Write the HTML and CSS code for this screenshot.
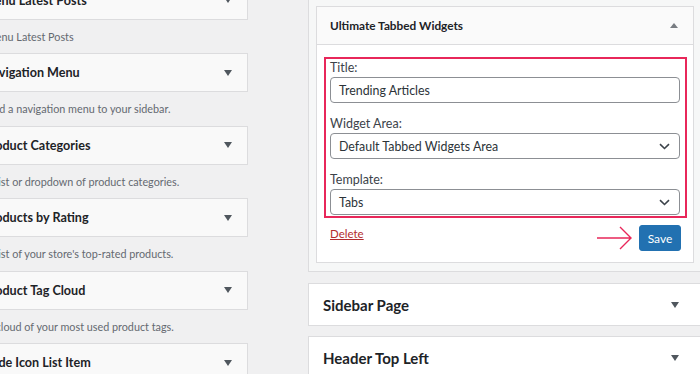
FILE: index.html
```html
<!DOCTYPE html>
<html lang="en">
<head>
    <meta charset="UTF-8">
    <meta name="viewport" content="width=device-width, initial-scale=1.0">
    <title>Widgets</title>
    <link rel="stylesheet" href="styles.css">
</head>
<body>
<main class="screen">
    <section class="available">
        <div class="w_card"><span class="w_title">Menu Latest Posts</span><i class="tri"></i></div>
        <div class="w_desc">Menu Latest Posts</div>
        <div class="w_card"><span class="w_title">Navigation Menu</span><i class="tri"></i></div>
        <div class="w_desc">Add a navigation menu to your sidebar.</div>
        <div class="w_card"><span class="w_title">Product Categories</span><i class="tri"></i></div>
        <div class="w_desc">A list or dropdown of product categories.</div>
        <div class="w_card"><span class="w_title">Products by Rating</span><i class="tri"></i></div>
        <div class="w_desc">A list of your store's top-rated products.</div>
        <div class="w_card"><span class="w_title">Product Tag Cloud</span><i class="tri"></i></div>
        <div class="w_desc">A cloud of your most used product tags.</div>
        <div class="w_card"><span class="w_title">Code Icon List Item</span><i class="tri"></i></div>
    </section>

    <section class="sidebars">
        <div class="holder">
            <div class="widget">
                <div class="widget_top">
                    <span class="widget_name">Ultimate Tabbed Widgets</span>
                    <i class="tri up"></i>
                </div>
                <div class="widget_body">
                    <div class="marked">
                        <div class="field">
                            <label class="lbl">Title:</label>
                            <div class="ctrl">Trending Articles</div>
                        </div>
                        <div class="field">
                            <label class="lbl">Widget Area:</label>
                            <div class="ctrl">Default Tabbed Widgets Area
                                <svg class="chev" width="11" height="7" viewBox="0 0 11 7"><path d="M1 1.2 L5.5 5.5 L10 1.2" fill="none" stroke="#3c434a" stroke-width="1.6"/></svg>
                            </div>
                        </div>
                        <div class="field last">
                            <label class="lbl">Template:</label>
                            <div class="ctrl">Tabs
                                <svg class="chev" width="11" height="7" viewBox="0 0 11 7"><path d="M1 1.2 L5.5 5.5 L10 1.2" fill="none" stroke="#3c434a" stroke-width="1.6"/></svg>
                            </div>
                        </div>
                    </div>
                    <div class="actions">
                        <a class="del" href="#">Delete</a>
                        <svg class="pointer" width="36" height="24" viewBox="0 0 36 24"><path d="M0 12 H34 M23 1 L34 12 L23 23" fill="none" stroke="#e8275a" stroke-width="1.4"/></svg>
                        <button class="but_save" type="button">Save</button>
                    </div>
                </div>
            </div>
        </div>
        <div class="sb_card"><span class="sb_title">Sidebar Page</span><i class="tri"></i></div>
        <div class="sb_card"><span class="sb_title">Header Top Left</span><i class="tri"></i></div>
    </section>
</main>
</body>
</html>
```

FILE: styles.css
```css
*{
    box-sizing: border-box;
    font-family: Lato, "Open Sans", Arial, sans-serif;
}
body{
    margin: 0;
    background-color: #f0f0f1;
    color: #1d2327;
    overflow: hidden;
    height: 374px;
}
.screen{
    display: flex;
    align-items: flex-start;
}
.available{
    margin-left: -30px;
    margin-top: -19.5px;
    width: 278px;
    flex-shrink: 0;
}
.w_card{
    height: 39px;
    background-color: #f9f9f9;
    border: 1px solid #dcdcde;
    display: flex;
    align-items: center;
    justify-content: space-between;
    padding: 0 14px 0 12px;
}
.w_title{
    font-size: 12.6px;
    font-weight: 700;
}
.w_desc{
    height: 33.5px;
    padding: 8px 16px 0;
    font-size: 10.8px;
    line-height: 18px;
    color: #646970;
}
.tri{
    width: 0;
    height: 0;
    border-left: 4.5px solid transparent;
    border-right: 4.5px solid transparent;
    border-top: 6px solid #50575e;
}
.w_card .tri{
    margin-right: 1px;
}
.tri.up{
    border-top: 0;
    border-bottom: 5px solid #787c82;
    border-left-width: 4px;
    border-right-width: 4px;
}
.sidebars{
    margin-left: 60px;
    width: 394px;
    flex-shrink: 0;
}
.holder{
    margin-top: -10px;
    padding: 15px 7px 8px;
    background-color: #f6f7f7;
    border: 1px solid #dcdcde;
}
.widget{
    background-color: #fff;
    border: 1px solid #dcdcde;
}
.widget_top{
    height: 38px;
    background-color: #fafafa;
    border-bottom: 1px solid #dcdcde;
    display: flex;
    align-items: center;
    justify-content: space-between;
    padding: 0 15px 0 13px;
}
.widget_name{
    font-size: 11.8px;
    font-weight: 700;
}
.widget_body{
    padding: 12px 6px 11px 7px;
}
.marked{
    border: 2px solid #e8275a;
    padding: 0 5px 1px 4px;
}
.field{
    margin-bottom: 12px;
}
.field.last{
    margin-bottom: 0;
}
.lbl{
    display: block;
    font-size: 12.5px;
    line-height: 18px;
    color: #3c434a;
}
.ctrl{
    height: 26px;
    border: 1px solid #8c8f94;
    border-radius: 4px;
    padding: 0 8px;
    display: flex;
    align-items: center;
    justify-content: space-between;
    font-size: 12.4px;
    color: #2c3338;
    background-color: #fff;
}
.chev{
    margin-right: 1px;
}
.actions{
    display: flex;
    align-items: center;
    margin-top: 7px;
    padding: 0 6px;
}
.del{
    font-size: 11.5px;
    color: #b32d2e;
    text-decoration: underline;
    margin-right: auto;
    margin-top: -10px;
}
.pointer{
    margin-right: 6px;
}
.but_save{
    height: 26px;
    width: 42px;
    padding: 0;
    border: 1px solid #2271b1;
    border-radius: 3px;
    background-color: #2271b1;
    color: #fff;
    font-size: 12px;
}
.sb_card{
    margin-top: 11px;
    height: 43px;
    background-color: #fff;
    border: 1px solid #dcdcde;
    display: flex;
    align-items: center;
    justify-content: space-between;
    padding: 0 22px 0 14px;
}
.sb_card + .sb_card{
    margin-top: 10px;
}
.sb_title{
    font-size: 15px;
    font-weight: 700;
}
```
